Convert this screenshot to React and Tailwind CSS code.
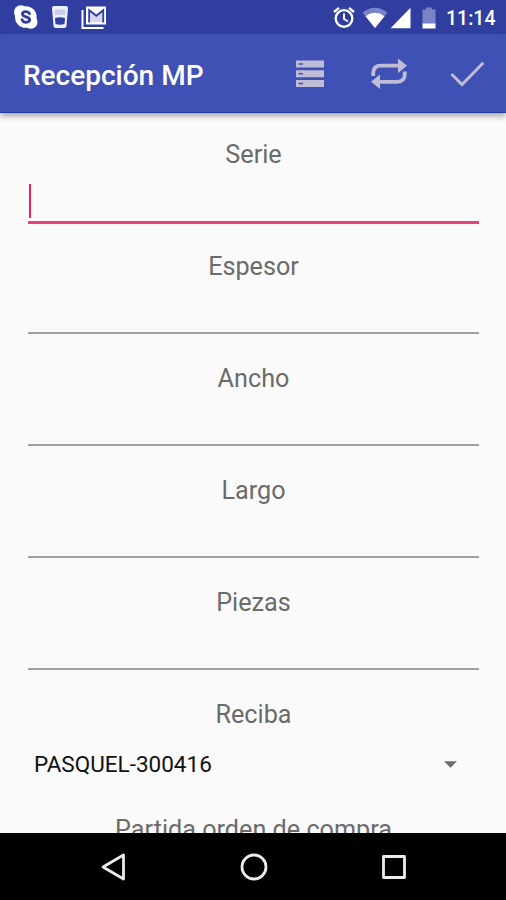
import React, { useState } from 'react';

const FIELDS = [
  { id: 'serie', label: 'Serie' },
  { id: 'espesor', label: 'Espesor' },
  { id: 'ancho', label: 'Ancho' },
  { id: 'largo', label: 'Largo' },
  { id: 'piezas', label: 'Piezas' },
];

function StatusBar() {
  return (
    <div className="flex h-[34px] shrink-0 items-center bg-[#303f9f] pl-[13px] pr-[9px] text-white">
      {/* notifications */}
      <svg className="h-[26px] w-[26px]" viewBox="0 0 26 26" fill="currentColor">
        <circle cx="7.800" cy="8" r="6.800" />
        <circle cx="17.800" cy="18" r="6.800" />
        <circle cx="12.800" cy="13" r="10.800" />
        <path d="M16.500 9.700c-.6-1.400-1.900-2.100-3.600-2.100-2.100 0-3.500.9-3.500 2.400 0 3.700 7.300 2 7.300 5.600 0 1.700-1.500 2.700-3.700 2.700-2.100 0-3.500-.9-4-2.600" fill="none" stroke="#303f9f" strokeWidth="2.800" strokeLinecap="round" />
      </svg>
      <svg className="ml-[12px] h-[24px] w-[18px]" viewBox="0 0 18 24">
        <path d="M1 3q0-2 2-2h12q2 0 2 2l-1.500 18q-.2 2-2.200 2H4.700q-2 0-2.200-2z" fill="#eceefa" />
        <path d="M3.500 4.500h11l-.4 5.500H3.900z" fill="#c9ceee" />
        <path d="M4 13q5-1.500 10 0l-.5 6q-4.500 1.500-9 0z" fill="#303f9f" />
      </svg>
      <svg className="ml-[12px] h-[26px] w-[26px]" viewBox="0 0 26 26" fill="none" stroke="currentColor">
        <path d="M1.500 6v18h21" strokeWidth="2" />
        <path d="M5 2.500h20v18H5z" fill="currentColor" stroke="none" />
        <path d="M9.500 18V7l5.800 5 5.700-5v11z" fill="#d3d7ef" stroke="none" />
        <path d="M8.200 18.500V6.200l7.100 5.600 6.900-5.600v12.300" strokeWidth="1.900" stroke="#303f9f" />
      </svg>

      {/* system */}
      <svg className="ml-auto h-[24px] w-[24px]" viewBox="0 0 24 24" fill="none" stroke="currentColor" strokeWidth="2.300">
        <circle cx="12" cy="13.500" r="8.300" />
        <path d="M12 8.500V14l4 2.500" strokeWidth="1.900" />
        <path d="M2 7 7 2.800M22 7 17 2.800" />
      </svg>
      <svg className="ml-[6px] mt-px h-[22px] w-[26px]" viewBox="0 0 26 22">
        <path d="M.5 5.500Q13-4 25.500 5.500L13 21z" fill="#7984c6" />
        <path d="M3.500 9.200Q13 2.500 22.500 9.200L13 21z" fill="#fff" />
      </svg>
      <svg className="ml-[2px] mt-px h-[22px] w-[21px]" viewBox="0 0 21 22" fill="currentColor">
        <path d="M20.500.8v20.400H.5z" />
      </svg>
      <svg className="ml-[11px] mt-px h-[22px] w-[14px]" viewBox="0 0 14 22">
        <path d="M4 .5h6v2h3.500V17H.5V2.500H4z" fill="#7984c6" />
        <path d="M.5 16.500h13v5H.5z" fill="#fff" />
      </svg>
      <span className="ml-[10px] mt-[3px] w-[51px] whitespace-nowrap text-[19.500px] font-medium leading-none">11:14</span>
    </div>
  );
}

function AppBar() {
  return (
    <header className="z-10 flex h-[79px] shrink-0 items-center border-b border-[#1f3b9d] bg-[#3f51b5] pl-[23px] pr-[21px] text-[#bfbcd6] shadow-[0_3px_6px_rgba(0,0,0,0.35)]">
      <h1 className="mt-[5px] flex-1 whitespace-nowrap text-[28px] font-medium leading-none text-white">Recepción MP</h1>
      <button aria-label="Lista" className="mt-[2px]">
        <svg className="h-[28px] w-[28px]" viewBox="0 0 28 28">
          <path d="M0 .5h28v7H0zM0 10.300h28v7H0zM0 20h28v7H0z" fill="currentColor" />
          <path d="M2.500 4H7M2.500 13.800H7M2.500 23.500H7" stroke="#3f51b5" strokeWidth="1.500" />
        </svg>
      </button>
      <button aria-label="Repetir" className="ml-[47px] mt-[2px]">
        <svg className="h-[32px] w-[36px]" viewBox="0 0 36 32" fill="currentColor">
          <path d="M2.200 18v-2.500q0-7.800 7.800-7.800H28M33.800 13.500V16q0 7.800-7.800 7.800H8" fill="none" stroke="currentColor" strokeWidth="3.800" />
          <path d="M27 .5 36 7.700 27 14.900zM9 16.600 0 23.800 9 31z" />
        </svg>
      </button>
      <button aria-label="Guardar" className="ml-[43px] mt-[2px]">
        <svg className="h-[26px] w-[35px]" viewBox="0 0 35 26" fill="none" stroke="currentColor" strokeWidth="3">
          <path d="M1.500 13 12 23.500 33.300 1.800" />
        </svg>
      </button>
    </header>
  );
}

function Label({ children, htmlFor }) {
  return (
    <label htmlFor={htmlFor} className="block h-[30px] whitespace-nowrap text-center text-[25.200px] leading-[32px] text-[#6b6b6b]">
      {children}
    </label>
  );
}

function Field({ field, active, value, onChange, onFocus }) {
  return (
    <div className="h-[112px]">
      <Label htmlFor={field.id}>{field.label}</Label>
      <div className={active ? 'flex h-[55px] items-end border-b-3 border-[#ec407a] pb-[3px]' : 'flex h-[53px] items-end border-b-2 border-[#a0a0a0] pb-[3px]'}>
        {active && <span className="ml-px h-[34px] w-[2px] shrink-0 bg-[#e91e63]" />}
        <input
          id={field.id}
          value={value}
          onChange={onChange}
          onFocus={onFocus}
          className="h-[34px] w-full bg-transparent text-[25px] text-black caret-transparent outline-none"
        />
      </div>
    </div>
  );
}

function NavBar() {
  return (
    <nav className="z-10 flex h-[67px] shrink-0 items-center justify-between bg-black pl-[100px] pr-[99px] text-[#ececec]">
      <svg className="h-[28px] w-[26px]" viewBox="0 0 26 28" fill="none" stroke="currentColor" strokeWidth="2.800" strokeLinejoin="round">
        <path d="M23.500 2v24L3 14z" />
      </svg>
      <svg className="h-[28px] w-[28px]" viewBox="0 0 28 28" fill="none" stroke="currentColor" strokeWidth="2.800">
        <circle cx="14" cy="14" r="12" />
      </svg>
      <svg className="h-[26px] w-[26px]" viewBox="0 0 26 26" fill="none" stroke="currentColor" strokeWidth="2.800" strokeLinejoin="round">
        <path d="M2.500 2.500h21v21h-21z" />
      </svg>
    </nav>
  );
}

export default function App() {
  const [active, setActive] = useState('serie');
  const [values, setValues] = useState({});

  return (
    <div className="flex h-[900px] w-[506px] flex-col overflow-hidden bg-[#fafafa] font-[Roboto,sans-serif]">
      <StatusBar />
      <AppBar />
      <main className="min-h-0 flex-1 overflow-hidden pl-[28px] pr-[27px] pt-[26px]">
        {FIELDS.map(f => (
          <Field
            key={f.id}
            field={f}
            active={active === f.id}
            value={values[f.id] || ''}
            onChange={e => setValues({ ...values, [f.id]: e.target.value })}
            onFocus={() => setActive(f.id)}
          />
        ))}
        <Label>Reciba</Label>
        <div className="flex h-[68px] items-center justify-between pl-[6px] pr-[22px] pt-[3px]">
          <span className="whitespace-nowrap text-[22.500px] text-[#111]">PASQUEL-300416</span>
          <svg className="h-[7px] w-[13px]" viewBox="0 0 14 7" fill="#6e6e6e">
            <path d="M0 0h14L7 7z" />
          </svg>
        </div>
        <div className="pt-[17px]">
          <Label>Partida orden de compra</Label>
        </div>
      </main>
      <NavBar />
    </div>
  );
}
